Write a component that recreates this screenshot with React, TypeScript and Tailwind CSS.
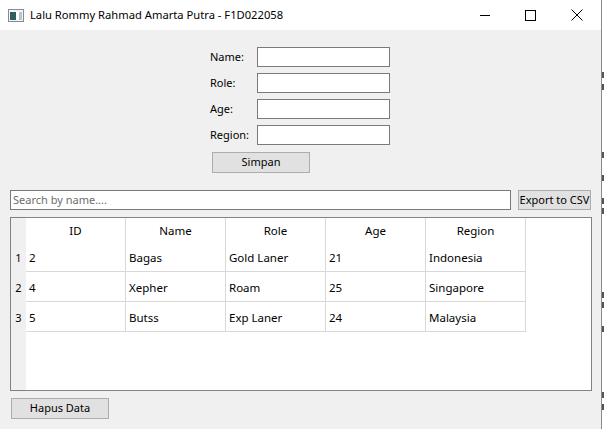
import React from "react";

const font = { fontFamily: '"Noto Sans", "Segoe UI", sans-serif' };

const rows = [
  ["2", "Bagas", "Gold Laner", "21", "Indonesia"],
  ["4", "Xepher", "Roam", "25", "Singapore"],
  ["5", "Butss", "Exp Laner", "24", "Malaysia"],
];
const headers = ["ID", "Name", "Role", "Age", "Region"];

function Field({ label }: { label: string }) {
  return (
    <div className="flex items-center h-[20px]">
      <div className="w-[47px] text-[11px] text-black">{label}</div>
      <div className="w-[133px] h-[20px] bg-white border border-[#7a7a7a]" />
    </div>
  );
}

function Btn({ children, className }: { children: React.ReactNode; className: string }) {
  return (
    <div
      className={
        "flex items-center justify-center whitespace-nowrap bg-[#e1e1e1] border border-[#adadad] text-[11px] text-black " +
        className
      }
    >
      {children}
    </div>
  );
}

const marks = [72, 84, 152, 175, 198, 208, 292, 302, 326, 392, 404];

export default function App() {
  return (
    <div className="flex w-[604px] h-[429px] overflow-hidden bg-white" style={font}>
      <div className="w-[601px] h-full flex flex-col bg-[#f0f0f0]">
        {/* title bar */}
        <div className="h-[30px] bg-white flex items-center shrink-0">
          <svg width="16" height="13" viewBox="0 0 16 13" className="ml-[8px] mr-[6px]">
            <rect x="0.5" y="0.5" width="15" height="12" fill="#f4f4f4" stroke="#8a8a8a" />
            <rect x="2" y="3" width="6" height="8" fill="#2f5f5a" />
            <rect x="8" y="3" width="6" height="8" fill="#ffffff" />
            <rect x="11" y="3" width="3" height="8" fill="#b8c4c8" />
          </svg>
          <span className="text-[11.2px] text-black whitespace-nowrap">Lalu Rommy Rahmad Amarta Putra - F1D022058</span>
          <div className="flex-1" />
          <svg width="11" height="11" viewBox="0 0 11 11" className="mr-[34px]">
            <line x1="0" y1="5.5" x2="10" y2="5.5" stroke="#000" strokeWidth="1" />
          </svg>
          <svg width="11" height="11" viewBox="0 0 11 11" className="mr-[35px]">
            <rect x="0.5" y="0.5" width="10" height="10" fill="none" stroke="#000" strokeWidth="1" />
          </svg>
          <svg width="12" height="12" viewBox="0 0 12 12" className="mr-[18px]">
            <line x1="0.5" y1="0.5" x2="11.5" y2="11.5" stroke="#000" strokeWidth="1" />
            <line x1="11.5" y1="0.5" x2="0.5" y2="11.5" stroke="#000" strokeWidth="1" />
          </svg>
        </div>

        {/* form */}
        <div className="pl-[210px] pt-[17px] flex flex-col gap-[6px]">
          <Field label="Name:" />
          <Field label="Role:" />
          <Field label="Age:" />
          <Field label="Region:" />
        </div>
        <div className="pl-[212px] mt-[7px]">
          <Btn className="w-[98px] h-[21px]">Simpan</Btn>
        </div>

        {/* search row */}
        <div className="flex mt-[17px] pl-[10px] gap-[7px]">
          <div className="w-[501px] h-[20px] bg-white border border-[#7a7a7a] flex items-center pl-[2px] text-[11px] text-[#6d6d6d]">
            Search by name....
          </div>
          <Btn className="w-[73px] h-[20px]">Export to CSV</Btn>
        </div>

        {/* table */}
        <div className="ml-[10px] mt-[7px] w-[582px] h-[174px] border border-[#828282] bg-white flex">
          <div className="w-[15px] bg-[#f0f0f0] flex flex-col shrink-0">
            <div className="h-[24px]" />
            {rows.map((_, i) => (
              <div key={i} className="h-[30px] pt-[2px] flex items-center justify-center text-[11px] text-black">
                {i + 1}
              </div>
            ))}
          </div>
          <div className="flex flex-col">
            <div className="flex h-[24px]">
              {headers.map((h) => (
                <div
                  key={h}
                  className="w-[100px] border-r border-[#d8d8d8] pt-[1px] flex items-center justify-center text-[11.5px] text-black"
                >
                  {h}
                </div>
              ))}
            </div>
            {rows.map((r, i) => (
              <div key={i} className="flex h-[30px]">
                {r.map((c, j) => (
                  <div
                    key={j}
                    className="w-[100px] border-r border-b border-[#d8d8d8] pt-[2px] flex items-center pl-[3px] text-[11.5px] text-black"
                  >
                    {c}
                  </div>
                ))}
              </div>
            ))}
          </div>
        </div>

        <div className="pl-[11px] mt-[7px]">
          <Btn className="w-[98px] h-[21px]">Hapus Data</Btn>
        </div>
      </div>
      <div className="w-px h-full bg-[#8a8a8a]" />
      <div className="flex-1 flex flex-col bg-white">
        {marks.map((y, i) => (
          <div
            key={i}
            className="h-[6px] w-[2px] bg-[#555]"
            style={{ marginTop: i === 0 ? y : y - marks[i - 1] - 6 }}
          />
        ))}
      </div>
    </div>
  );
}
